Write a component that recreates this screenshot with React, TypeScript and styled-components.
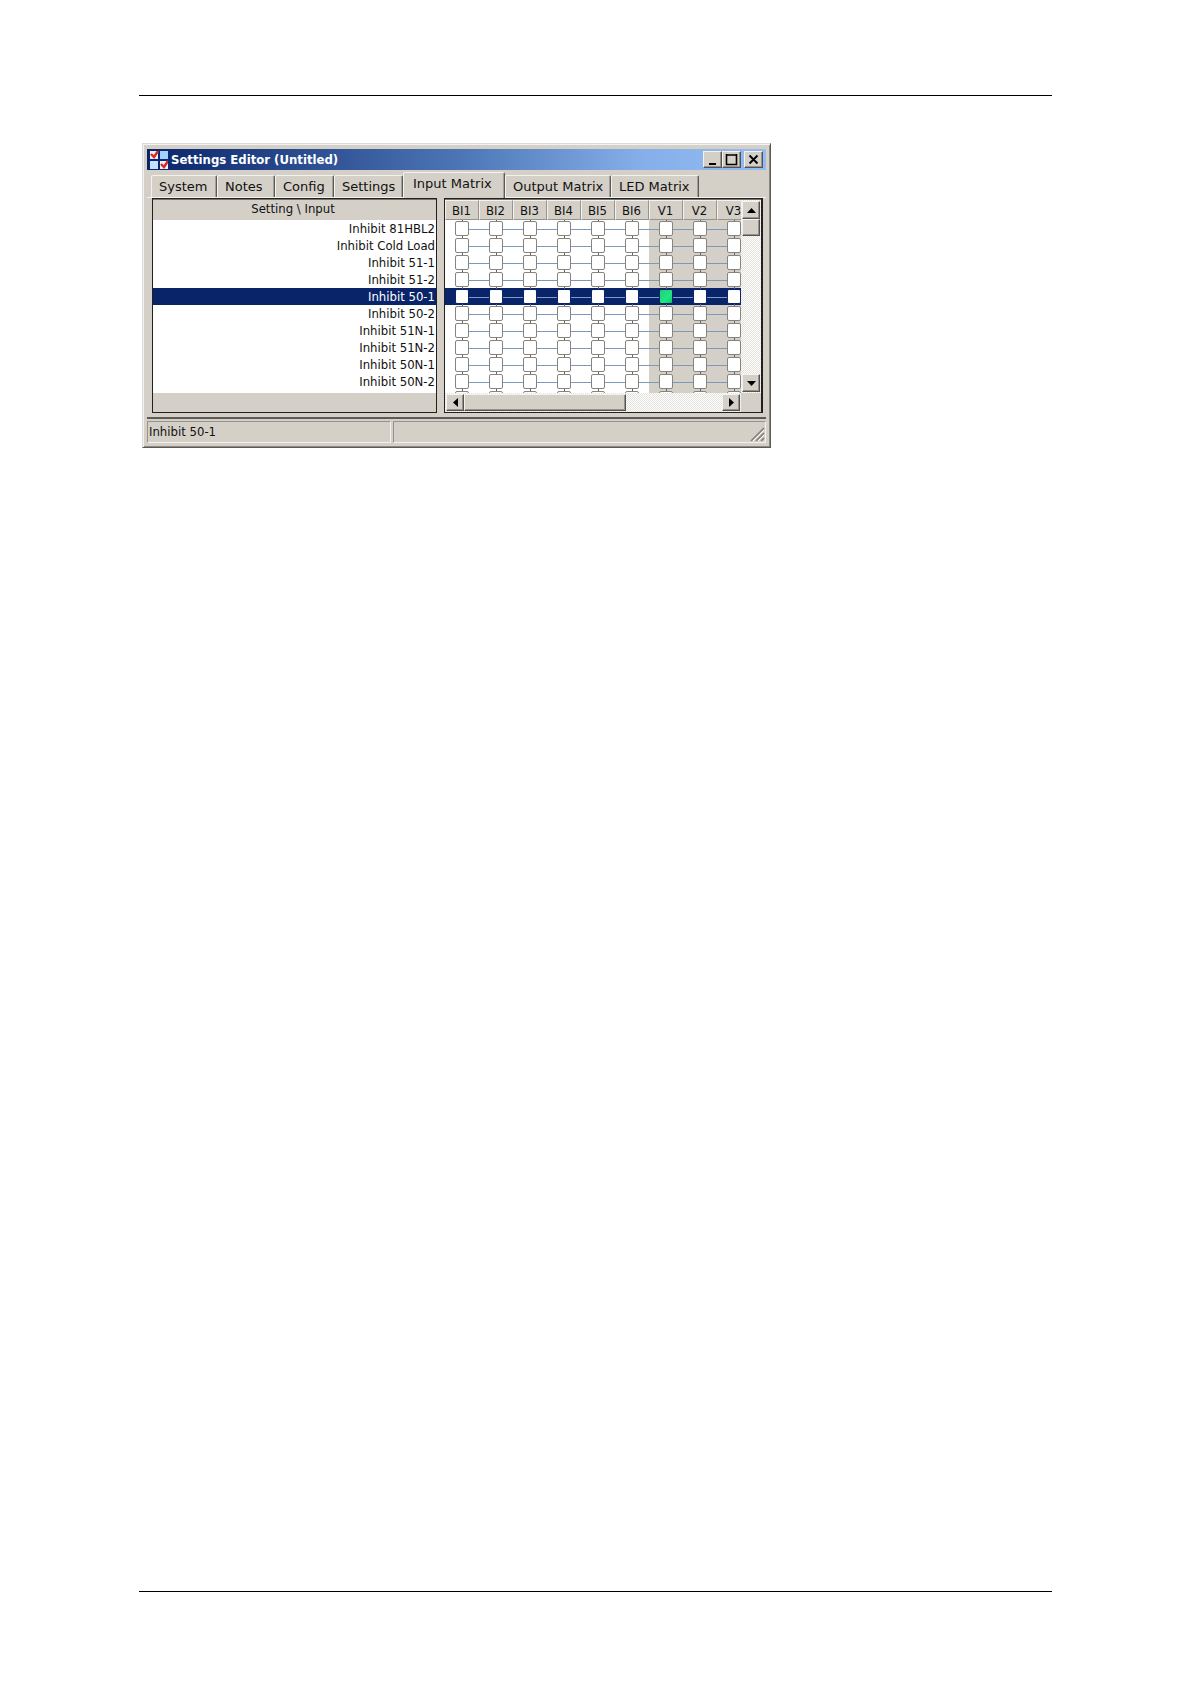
import React, { useState } from "react";
import styled, { createGlobalStyle, css } from "styled-components";

const face = "#d4d0c8";
const navy = "#0a246a";
const ui = '"DejaVu Sans Condensed", "DejaVu Sans", sans-serif';

const raised = css`
  border: 1px solid;
  border-color: #f4f2ee #55534f #55534f #f4f2ee;
  box-shadow: inset -1px -1px 0 #96938c;
`;

const GlobalStyle = createGlobalStyle`
  *, *::before, *::after { box-sizing: border-box; }
  body { margin: 0; background: #fff; color: #111; font: 13px/17px ${ui}; }
  button { font: inherit; color: inherit; padding: 0; }
`;

const Page = styled.div`
  min-height: 100vh;
  padding: 95px 139px 92px;
  display: flex;
  flex-direction: column;
`;

const Rule = styled.hr`
  width: 100%;
  height: 1px;
  margin: 0;
  border: 0;
  background: #000;
`;

const Main = styled.main`
  flex: 1;
  padding: 47px 3px;
`;

const Window = styled.section`
  width: 100%;
  max-width: 629px;
  padding: 5px 4px 4px;
  background: ${face};
  border: 1px solid;
  border-color: #dcdad4 #5c5a56 #5c5a56 #dcdad4;
  box-shadow: inset 1px 1px 0 #f4f2ee, inset -1px -1px 0 #8c8983;
`;

const TitleBar = styled.header`
  height: 21px;
  padding: 0 3px;
  display: flex;
  align-items: center;
  gap: 3px;
  background: linear-gradient(90deg, ${navy}, #4f78b8 52%, #86afea 80%, #94bcf2);
`;

const Title = styled.h1`
  flex: 1;
  margin: 0;
  color: #fff;
  font: bold 13px/21px ${ui};
`;

const Caption = styled.div`
  display: flex;
`;

const CaptionButton = styled.button<{ $apart?: boolean }>`
  width: 19px;
  height: 17px;
  margin-left: ${(p) => (p.$apart ? 3 : 0)}px;
  display: grid;
  place-items: center;
  background: ${face};
  ${raised}
`;

const Tabs = styled.div`
  height: 28px;
  padding: 0 4px;
  display: flex;
  align-items: flex-end;
  border-bottom: 1px solid #f4f2ee;
`;

const Tab = styled.button<{ $active: boolean; $width: number }>`
  flex: 0 0 ${(p) => p.$width}px;
  height: ${(p) => (p.$active ? 26 : 22)}px;
  margin-bottom: ${(p) => (p.$active ? -1 : 0)}px;
  padding: ${(p) => (p.$active ? "0 0 5px 9px" : "0 0 1px 7px")};
  text-align: left;
  background: ${face};
  border: 1px solid;
  border-color: #f4f2ee #5c5a56 transparent #f4f2ee;
  border-bottom-width: 0;
  border-radius: 2px 2px 0 0;
  box-shadow: inset -1px 0 0 #a3a098;
  font: 13px/17px "DejaVu Sans", sans-serif;
  white-space: nowrap;
`;

const Panels = styled.div`
  padding: 0 3px 4px 5px;
  display: grid;
  grid-template-columns: 285px minmax(0, 1fr);
  gap: 7px;
`;

const Panel = styled.div`
  min-width: 0;
  height: 215px;
  background: ${face};
  border: 1px solid #22211f;
  box-shadow: inset 0 1px 0 #77746e;
`;

const ListHeading = styled.h2`
  height: 21px;
  margin: 0;
  padding-right: 3px;
  text-align: center;
  font: 13px/19px ${ui};
`;

const SettingList = styled.ul`
  margin: 0;
  padding: 0 0 3px;
  list-style: none;
  background: #fff;
`;

const SettingRow = styled.li<{ $selected: boolean }>`
  height: 17px;
  padding-right: 1px;
  text-align: right;
  line-height: 17px;
  background: ${(p) => (p.$selected ? navy : "#fff")};
  color: ${(p) => (p.$selected ? "#fff" : "#111")};
`;

const MatrixPanel = styled(Panel)`
  display: grid;
  grid-template-columns: minmax(0, 1fr) 20px;
  grid-template-rows: minmax(0, 1fr) 19px;
  padding-top: 1px;
  border-right-width: 2px;
`;

const Viewport = styled.div`
  overflow: hidden;
  background: #fff;
`;

const Matrix = styled.table`
  width: 306px;
  table-layout: fixed;
  border-spacing: 0;
`;

const ColumnHead = styled.th`
  height: 20px;
  padding: 0 1px 0 0;
  background: ${face};
  border: 1px solid;
  border-color: #f4f2ee #96938c #96938c #f4f2ee;
  font-weight: normal;
  line-height: 17px;
`;

const Cell = styled.td<{ $selected: boolean; $virtual: boolean }>`
  height: 17px;
  padding: 1px 10px;
  line-height: 0;
  background-color: ${(p) => (p.$selected ? navy : p.$virtual ? face : "#fff")};
  background-image: linear-gradient(${(p) => (p.$selected ? "#7f9cc8, #7f9cc8" : "#7b9abb, #7b9abb")}),
    linear-gradient(#66645f, #66645f);
  background-size: 100% 1px, 1px 100%;
  background-position: 0 9px, 17px 0;
  background-repeat: no-repeat;
  &:first-child {
    background-position: 17px 9px, 17px 0;
  }
`;

const Box = styled.input<{ $selected: boolean }>`
  appearance: none;
  display: block;
  width: 14px;
  height: 15px;
  margin: 0;
  background: #fff;
  border: 1px solid ${(p) => (p.$selected ? navy : "#86847e")};
  border-radius: 2px;
  &:checked {
    background: linear-gradient(135deg, #25cf78, #1fe583 60%, #12c964);
  }
`;

const ScrollBar = styled.div<{ $vertical?: boolean }>`
  min-width: 0;
  padding: 1px;
  display: flex;
  flex-direction: ${(p) => (p.$vertical ? "column" : "row")};
  background: repeating-conic-gradient(#fff 0 25%, #e4e2dd 0 50%) 0 0 / 2px 2px;
`;

const ScrollButton = styled.button`
  flex: 0 0 18px;
  display: grid;
  place-items: center;
  background: ${face};
  ${raised}
`;

const Thumb = styled.div<{ $length: string }>`
  flex: 0 0 ${(p) => p.$length};
  background: ${face};
  ${raised}
`;

const Track = styled.div`
  flex: 1;
`;

const StatusBar = styled.footer`
  padding-top: 2px;
  display: grid;
  grid-template-columns: 244px minmax(0, 1fr);
  gap: 2px;
  border-top: 2px solid #5c5a56;
`;

const StatusCell = styled.div`
  height: 22px;
  padding-left: 1px;
  display: flex;
  align-items: flex-end;
  justify-content: space-between;
  line-height: 20px;
  border: 1px solid;
  border-color: #96938c #f4f2ee #f4f2ee #96938c;
`;

const Drawing = styled.svg`
  display: block;
  flex: none;
`;

const AppIcon = () => (
  <Drawing width="18" height="18" viewBox="0 0 18 18" aria-hidden="true">
    <path fill="#e6f3ff" d="M0 0h8v8H0z" />
    <path fill="#9fd2ff" d="M10 0h8v8h-8z" />
    <path fill="#c2e3ff" d="M0 10h8v8H0z" />
    <path fill="#e6f3ff" d="M10 10h8v8h-8z" />
    <path d="M1 3l3 3 4-6M11 13l3 3 4-6" fill="none" stroke="#e0281f" strokeWidth="2.4" />
  </Drawing>
);

const captionShapes: Record<string, React.ReactNode> = {
  Minimize: <path d="M3 11h7" stroke="#000" strokeWidth="2" />,
  Maximize: <path d="M1.5 1v10.5h10V1M1 2h11" fill="none" stroke="#000" strokeWidth="1.6" />,
  Close: <path d="M2.5 2.5l8 8M10.5 2.5l-8 8" stroke="#000" strokeWidth="1.8" />,
};

const arrows = {
  up: "M0 7L4.5 2L9 7z",
  down: "M0 2L4.5 7L9 2z",
  left: "M7 0L2 4.5L7 9z",
  right: "M2 0L7 4.5L2 9z",
};

const Arrow = ({ to }: { to: keyof typeof arrows }) => (
  <ScrollButton aria-label={`Scroll ${to}`}>
    <Drawing width="9" height="9" viewBox="0 0 9 9">
      <path d={arrows[to]} />
    </Drawing>
  </ScrollButton>
);

const tabs = [
  { name: "System", width: 66 },
  { name: "Notes", width: 58 },
  { name: "Config", width: 59 },
  { name: "Settings", width: 69 },
  { name: "Input Matrix", width: 102 },
  { name: "Output Matrix", width: 106 },
  { name: "LED Matrix", width: 88 },
];

const settings = ["81HBL2", "Cold Load", "51-1", "51-2", "50-1", "50-2", "51N-1", "51N-2", "50N-1", "50N-2"].map(
  (s) => `Inhibit ${s}`,
);
const matrixRows = [...settings, "Inhibit 51G-1"];
const inputs = ["BI1", "BI2", "BI3", "BI4", "BI5", "BI6", "V1", "V2", "V3"];

export default function App() {
  const [tab, setTab] = useState("Input Matrix");
  const [selected, setSelected] = useState("Inhibit 50-1");

  return (
    <Page>
      <GlobalStyle />
      <Rule />
      <Main>
        <Window>
          <TitleBar>
            <AppIcon />
            <Title>Settings Editor (Untitled)</Title>
            <Caption>
              {Object.entries(captionShapes).map(([name, shape]) => (
                <CaptionButton key={name} aria-label={name} $apart={name === "Close"}>
                  <Drawing width="13" height="13" viewBox="0 0 13 13">
                    {shape}
                  </Drawing>
                </CaptionButton>
              ))}
            </Caption>
          </TitleBar>
          <Tabs role="tablist">
            {tabs.map(({ name, width }) => (
              <Tab
                key={name}
                role="tab"
                aria-selected={tab === name}
                $active={tab === name}
                $width={width}
                onClick={() => setTab(name)}
              >
                {name}
              </Tab>
            ))}
          </Tabs>
          <Panels>
            <Panel>
              <ListHeading>Setting \ Input</ListHeading>
              <SettingList>
                {settings.map((s) => (
                  <SettingRow key={s} $selected={s === selected} onClick={() => setSelected(s)}>
                    {s}
                  </SettingRow>
                ))}
              </SettingList>
            </Panel>
            <MatrixPanel>
              <Viewport>
                <Matrix>
                  <thead>
                    <tr>
                      {inputs.map((i) => (
                        <ColumnHead key={i} scope="col">
                          {i}
                        </ColumnHead>
                      ))}
                    </tr>
                  </thead>
                  <tbody>
                    {matrixRows.map((s) => (
                      <tr key={s}>
                        {inputs.map((i) => (
                          <Cell key={i} $selected={s === selected} $virtual={i.startsWith("V")}>
                            <Box
                              type="checkbox"
                              aria-label={`${s}, ${i}`}
                              $selected={s === selected}
                              defaultChecked={s === "Inhibit 50-1" && i === "V1"}
                            />
                          </Cell>
                        ))}
                      </tr>
                    ))}
                  </tbody>
                </Matrix>
              </Viewport>
              <ScrollBar $vertical>
                <Arrow to="up" />
                <Thumb $length="17px" />
                <Track />
                <Arrow to="down" />
              </ScrollBar>
              <ScrollBar>
                <Arrow to="left" />
                <Thumb $length="162px" />
                <Track />
                <Arrow to="right" />
              </ScrollBar>
            </MatrixPanel>
          </Panels>
          <StatusBar>
            <StatusCell>{selected}</StatusCell>
            <StatusCell>
              <span />
              <Drawing width="15" height="15" viewBox="0 0 15 15" aria-hidden="true">
                <path d="M1 14L14 1M6 14l8-8M11 14l3-3" stroke="#85827b" strokeWidth="1.6" />
                <path d="M3 14L14 3M8 14l6-6" stroke="#fff" />
              </Drawing>
            </StatusCell>
          </StatusBar>
        </Window>
      </Main>
      <Rule />
    </Page>
  );
}
